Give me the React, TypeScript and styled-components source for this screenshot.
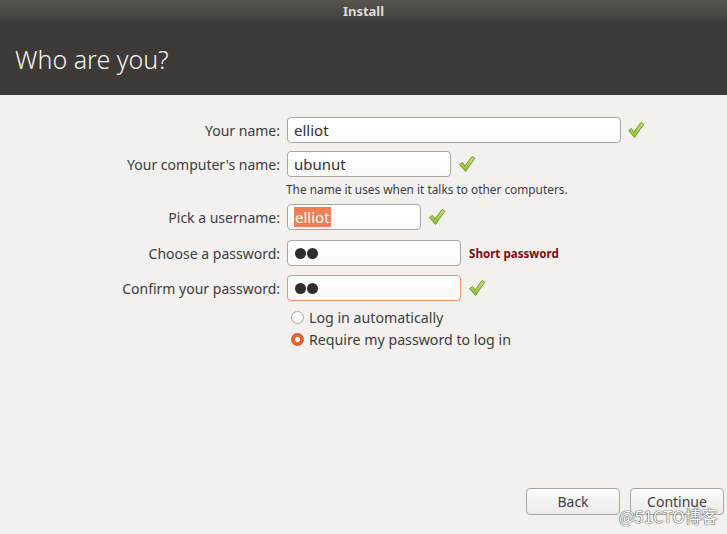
import React from "react";
import styled, { createGlobalStyle } from "styled-components";

const GlobalStyle = createGlobalStyle`
  html, body {
    margin: 0;
    padding: 0;
    background: #f2f1f0;
  }
  body {
    font-family: "Noto Sans", "Open Sans", sans-serif;
  }
`;

const Window = styled.div`
  position: relative;
  width: 727px;
  height: 534px;
  display: flex;
  flex-direction: column;
  background: #f2f1f0;
  overflow: hidden;
`;

const TitleBar = styled.div`
  height: 22px;
  display: flex;
  align-items: center;
  justify-content: center;
  background: linear-gradient(#58554f, #403e3a);
  color: #dfdbd2;
  font-size: 13px;
  font-weight: bold;
`;

const Header = styled.div`
  height: 73px;
  display: flex;
  align-items: center;
  padding-left: 15px;
  background: #3c3b37;
  color: #f2f1f0;
  font-size: 25px;
  font-weight: 300;
  box-sizing: border-box;
`;

const Form = styled.div`
  display: flex;
  flex-direction: column;
  padding-top: 22px;
  flex: 1;
`;

const Row = styled.div<{ $mt?: number }>`
  display: flex;
  align-items: center;
  margin-top: ${(p) => p.$mt ?? 0}px;
`;

const Label = styled.div`
  width: 280px;
  padding-right: 7px;
  text-align: right;
  font-size: 14px;
  color: #3c3c3c;
  flex-shrink: 0;
`;

const Input = styled.div<{ $w: number; $error?: boolean }>`
  width: ${(p) => p.$w}px;
  height: 26px;
  box-sizing: border-box;
  border: 1px solid ${(p) => (p.$error ? "#ec936c" : "#a9a7a3")};
  border-radius: 4px;
  background: linear-gradient(#ffffff, #fafafa);
  display: flex;
  align-items: center;
  padding-left: 6px;
  font-size: 15px;
  color: #333;
`;

const Selected = styled.span`
  background: #f07f52;
  color: #fff;
  padding: 0 1px;
  line-height: 20px;
`;

const Dot = styled.span`
  width: 11px;
  height: 11px;
  border-radius: 50%;
  background: #2e2e2e;
  margin-left: 1px;
`;

const Hint = styled.div`
  margin-left: 286px;
  margin-top: 4px;
  font-size: 11.85px;
  color: #3c3c3c;
  line-height: 16px;
`;

const Error = styled.span`
  margin-left: 8px;
  font-size: 11.6px;
  font-weight: bold;
  color: #7d0c10;
`;

const CheckWrap = styled.span<{ $ml?: number }>`
  display: inline-flex;
  margin-left: ${(p) => p.$ml ?? 8}px;
`;

const RadioRow = styled.label<{ $mt?: number }>`
  display: flex;
  align-items: center;
  margin-left: 291px;
  margin-top: ${(p) => p.$mt ?? 0}px;
  height: 22px;
  font-size: 14.2px;
  color: #3c3c3c;
  gap: 5px;
`;

const RadioDot = styled.span<{ $on?: boolean }>`
  width: 13px;
  height: 13px;
  box-sizing: border-box;
  border-radius: 50%;
  border: 1px solid ${(p) => (p.$on ? "#c84f22" : "#a9a7a3")};
  background: ${(p) =>
    p.$on ? "radial-gradient(circle, #fff 0 2.2px, #e5652f 2.8px)" : "linear-gradient(#fff, #f4f4f4)"};
`;

const ButtonBar = styled.div`
  display: flex;
  justify-content: flex-end;
  gap: 10px;
  padding: 0 3px 19px 0;
`;

const Button = styled.div`
  width: 94px;
  height: 27px;
  box-sizing: border-box;
  border: 1px solid #a9a7a3;
  border-radius: 4px;
  background: linear-gradient(#fbfbfb, #ecebea);
  display: flex;
  align-items: center;
  justify-content: center;
  font-size: 14px;
  color: #404040;
`;

const Watermark = styled.div`
  position: absolute;
  left: 619px;
  top: 504px;
  font-size: 16.5px;
  color: #fff;
  font-family: "Noto Sans CJK SC", sans-serif;
  text-shadow: 0 0 1px #555, 0 0 1px #555, 0 0 1px #555;
`;

const Check = () => (
  <svg width="18" height="18" viewBox="0 0 18 18">
    <defs>
      <linearGradient id="chk" x1="0" y1="0" x2="0" y2="1">
        <stop offset="0" stopColor="#c9e07a" />
        <stop offset="1" stopColor="#8fb83a" />
      </linearGradient>
    </defs>
    <path
      d="M1.5 9.5 L4.5 7.5 L7 11 L14 1.5 L16.8 3.2 L7.5 16.5 Z"
      fill="url(#chk)"
      stroke="#6f9a26"
      strokeWidth="1"
      strokeLinejoin="round"
    />
  </svg>
);

const Password = () => (
  <>
    <Dot />
    <Dot />
  </>
);

export default function App() {
  return (
    <Window>
      <GlobalStyle />
      <TitleBar>Install</TitleBar>
      <Header>Who are you?</Header>
      <Form>
        <Row>
          <Label>Your name:</Label>
          <Input $w={334}>elliot</Input>
          <CheckWrap $ml={6}>
            <Check />
          </CheckWrap>
        </Row>
        <Row $mt={8}>
          <Label>Your computer's name:</Label>
          <Input $w={164}>ubunut</Input>
          <CheckWrap $ml={7}>
            <Check />
          </CheckWrap>
        </Row>
        <Hint>The name it uses when it talks to other computers.</Hint>
        <Row $mt={7}>
          <Label>Pick a username:</Label>
          <Input $w={134}>
            <Selected>elliot</Selected>
          </Input>
          <CheckWrap $ml={7}>
            <Check />
          </CheckWrap>
        </Row>
        <Row $mt={10}>
          <Label>Choose a password:</Label>
          <Input $w={174}>
            <Password />
          </Input>
          <Error>Short password</Error>
        </Row>
        <Row $mt={9}>
          <Label>Confirm your password:</Label>
          <Input $w={174} $error>
            <Password />
          </Input>
          <CheckWrap $ml={7}>
            <Check />
          </CheckWrap>
        </Row>
        <RadioRow $mt={5}>
          <RadioDot />
          Log in automatically
        </RadioRow>
        <RadioRow>
          <RadioDot $on />
          Require my password to log in
        </RadioRow>
        <div style={{ flex: 1 }} />
        <ButtonBar>
          <Button>Back</Button>
          <Button>Continue</Button>
        </ButtonBar>
      </Form>
      <Watermark>@51CTO博客</Watermark>
    </Window>
  );
}
